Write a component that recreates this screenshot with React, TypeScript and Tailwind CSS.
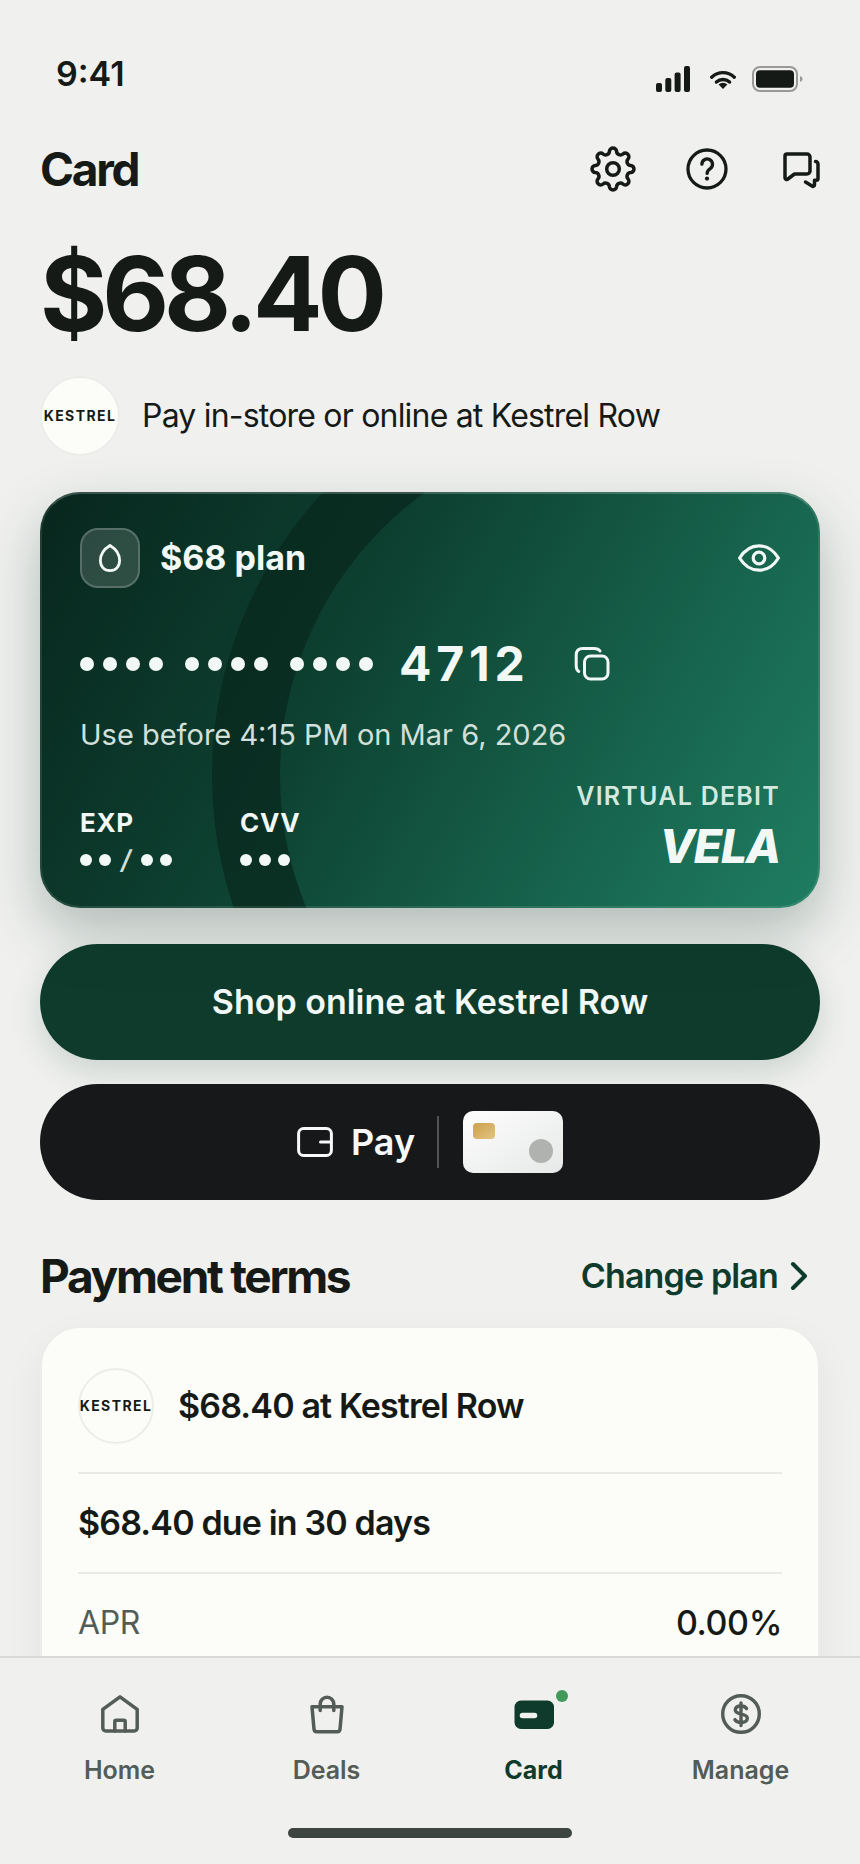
import type { ReactNode } from "react";

const stroke = {
  fill: "none",
  stroke: "currentColor",
  strokeLinecap: "round" as const,
  strokeLinejoin: "round" as const,
};

function gearPath(cx: number, cy: number) {
  const at = (deg: number) => {
    const a = (deg * Math.PI) / 180;
    return `${(cx + 18 * Math.sin(a)).toFixed(2)} ${(cy - 18 * Math.cos(a)).toFixed(2)}`;
  };
  let d = `M${at(-11.5)}`;
  for (let k = 0; k < 8; k++) {
    d += `A3.6 3.6 0 0 1 ${at(k * 45 + 11.5)}A3.8 3.8 0 0 0 ${at(k * 45 + 33.5)}`;
  }
  return d + "Z";
}

function GearIcon() {
  return (
    <svg viewBox="0 0 48 48" className="size-12" strokeWidth="3.5" {...stroke} aria-hidden="true">
      <path d={gearPath(24, 24)} />
      <circle cx="24" cy="24" r="6.3" />
    </svg>
  );
}

function HelpIcon() {
  return (
    <svg viewBox="0 0 48 48" className="size-12" strokeWidth="3.3" {...stroke} aria-hidden="true">
      <circle cx="24" cy="24" r="19" />
      <path d="M18.9 19.2a5.3 5.3 0 1 1 8.6 4.2c-2 1.4-3.4 2.4-3.4 5" />
      <circle cx="24" cy="33.6" r="2.1" fill="currentColor" stroke="none" />
    </svg>
  );
}

function ChatIcon() {
  return (
    <svg viewBox="0 0 48 48" className="size-12" strokeWidth="3.5" {...stroke} aria-hidden="true">
      <path d="M10 9h20a3 3 0 0 1 3 3v14a3 3 0 0 1-3 3H17.5l-6.6 5a1.7 1.7 0 0 1-2.9-1.2V11a2 2 0 0 1 2-2z" />
      <path d="M38.5 16.5a2.5 2.5 0 0 1 2.5 2.5v14.5a1.8 1.8 0 0 1-1.8 1.8h-1.7v4.5a1.5 1.5 0 0 1-2.5 1.2l-6.5-4" />
    </svg>
  );
}

function Signal() {
  return (
    <svg viewBox="0 0 34 26" className="h-[26px] w-[34px]" fill="currentColor" aria-hidden="true">
      <rect x="0" y="17" width="6" height="9" rx="2" />
      <rect x="9.3" y="12" width="6" height="14" rx="2" />
      <rect x="18.6" y="6.5" width="6" height="19.5" rx="2" />
      <rect x="28" y="0" width="6" height="26" rx="2" />
    </svg>
  );
}

function Wifi() {
  return (
    <svg viewBox="0 0 26 26" className="size-[26px]" strokeWidth="3.4" {...stroke} aria-hidden="true">
      <path d="M1.7 11.2c6.6-6.1 16-6.1 22.6 0" />
      <path d="M6.4 16c3.8-3.4 9.4-3.4 13.2 0" />
      <path d="M8.6 18.6a6.3 6.3 0 0 1 8.8 0L13 22.9z" fill="currentColor" stroke="none" />
    </svg>
  );
}

function Battery() {
  return (
    <svg viewBox="0 0 51 26" className="h-[26px] w-[51px]" aria-hidden="true">
      <rect x="1" y="1" width="44" height="24" rx="7" fill="none" stroke="#161a17" strokeOpacity="0.4" strokeWidth="2" />
      <rect x="4" y="4.3" width="38" height="17.4" rx="4" fill="#161a17" />
      <path d="M48 10c2 .8 2.5 1.8 2.5 3s-.5 2.2-2.5 3z" fill="#161a17" fillOpacity="0.4" />
    </svg>
  );
}

function Dots({ count, className }: { count: number; className: string }) {
  return (
    <>
      {Array.from({ length: count }, (_, i) => (
        <span key={i} className={`rounded-full bg-[#f1f8f5] ${className}`} />
      ))}
    </>
  );
}

function Merchant({ className }: { className: string }) {
  return (
    <span
      className={`flex shrink-0 items-center justify-center rounded-full border-2 border-[#ececeb] bg-[#fcfdf9] text-[14px] leading-4 font-bold tracking-widest text-[#161a17] ${className}`}
    >
      KESTREL
    </span>
  );
}

function NavItem({ label, active, children }: { label: string; active?: boolean; children: ReactNode }) {
  return (
    <a
      href="#"
      aria-current={active ? "page" : undefined}
      className={`flex flex-1 flex-col items-center gap-5 text-[25px] leading-8 ${
        active ? "font-bold text-[#0e3b2c]" : "font-semibold text-[#535c56]"
      }`}
    >
      <span className="relative">{children}</span>
      {label}
    </a>
  );
}

export default function App() {
  return (
    <div className="flex h-dvh flex-col overflow-hidden bg-[#f0f1ef] font-['Inter',sans-serif] text-[#161a17]">
      <main className="min-h-0 flex-1 overflow-y-auto [scrollbar-width:none]">
        <div className="flex items-end justify-between pt-14 pr-[57px] pl-14">
          <span className="text-[34px] leading-9 font-semibold">9:41</span>
          <div className="flex items-center">
            <Signal />
            <span className="ml-5">
              <Wifi />
            </span>
            <span className="ml-4">
              <Battery />
            </span>
          </div>
        </div>

        <header className="mt-[52px] flex h-[50px] items-center justify-between pr-[35px] pl-10">
          <h1 className="text-[46px] leading-[52px] font-bold tracking-tighter">Card</h1>
          <div className="flex gap-[46px]">
            <button type="button" aria-label="Settings">
              <GearIcon />
            </button>
            <button type="button" aria-label="Help">
              <HelpIcon />
            </button>
            <button type="button" aria-label="Messages">
              <ChatIcon />
            </button>
          </div>
        </header>

        <div className="px-10">
          <p className="mt-[50px] text-[103px] leading-[100px] font-bold tracking-tighter">$68.40</p>
          <div className="mt-8 flex items-center gap-[22px]">
            <Merchant className="size-20" />
            <p className="text-[32px] leading-[42px] tracking-tight">Pay in-store or online at Kestrel Row</p>
          </div>

          <section className="relative mt-9 flex min-h-[416px] flex-col overflow-hidden rounded-[40px] bg-linear-[120deg,#08261d_0%,#0d4030_38%,#196b53_80%,#1f7d60_100%] px-10 pt-9 pb-8 text-[#f1f8f5] shadow-[0_24px_56px_rgba(14,50,38,0.28)]">
            <div className="absolute top-[-133px] left-[172px] size-[832px] rounded-full border-[68px] border-[#08261d]/70" />
            <div className="absolute inset-0 rounded-[40px] border-2 border-white/10 border-t-white/20" />
            <div className="relative flex items-center gap-5">
              <span className="flex size-[60px] items-center justify-center rounded-[18px] border-2 border-white/20 bg-white/15">
                <svg viewBox="0 0 24 30" className="h-[30px] w-6" strokeWidth="2.8" {...stroke} aria-hidden="true">
                  <path d="M12 2.5C6.500 5.800 2.400 11.500 2.400 17.600c0 6 3.800 10 9.600 10s9.600-4 9.600-10C21.600 11.500 17.500 5.800 12 2.500z" />
                </svg>
              </span>
              <h2 className="flex-1 text-[34px] leading-[42px] font-bold">$68 plan</h2>
              <button type="button" aria-label="Show card details">
                <svg viewBox="0 0 42 28" className="h-7 w-[42px]" strokeWidth="3.2" {...stroke} aria-hidden="true">
                  <path d="M1.600 14C6.500 6 13 1.800 21 1.800S35.500 6 40.400 14C35.500 22 29 26.200 21 26.200S6.500 22 1.600 14z" />
                  <circle cx="21" cy="14" r="5.8" />
                </svg>
              </button>
            </div>

            <div className="relative mt-[52px] flex h-12 items-center">
              <div className="flex gap-[22px]">
                {[0, 1, 2].map((g) => (
                  <span key={g} className="flex gap-[9px]">
                    <Dots count={4} className="size-[14px]" />
                  </span>
                ))}
              </div>
              <span className="ml-[26px] text-[48px] leading-[50px] font-bold tracking-widest">4712</span>
              <button type="button" aria-label="Copy card number" className="ml-11">
                <svg viewBox="0 0 36 36" className="size-9" strokeWidth="3" {...stroke} aria-hidden="true">
                  <rect x="10.5" y="10" width="23.5" height="23" rx="6" />
                  <path d="M4.800 25.500C3 24.300 2.200 22.500 2.200 20V9c0-4.300 2.300-6.600 6.600-6.600H20c3 0 4.800.8 6 2.600" />
                </svg>
              </button>
            </div>

            <p className="relative mt-7 text-[29px] leading-[38px] text-[#d3e0da]">Use before 4:15 PM on Mar 6, 2026</p>

            <div className="relative mt-auto flex items-end">
              <div className="w-40">
                <p className="text-[26px] leading-[34px] font-bold tracking-wide">EXP</p>
                <div className="mt-1 flex h-8 items-center gap-[7px]">
                  <Dots count={2} className="size-3" />
                  <span className="w-4 text-center text-[26px] leading-8 font-semibold text-[#d3e0da] italic">/</span>
                  <Dots count={2} className="size-3" />
                </div>
              </div>
              <div className="flex-1">
                <p className="text-[26px] leading-[34px] font-bold tracking-wide">CVV</p>
                <div className="mt-1 flex h-8 items-center gap-[7px]">
                  <Dots count={3} className="size-3" />
                </div>
              </div>
              <div className="text-right">
                <p className="text-[25px] leading-8 font-semibold tracking-wider text-[#d3e8df]">VIRTUAL DEBIT</p>
                <p className="mt-1 text-[46px] leading-[60px] font-extrabold tracking-tight italic">VELA</p>
              </div>
            </div>
          </section>

          <button
            type="button"
            className="mt-9 flex h-[116px] w-full items-center justify-center rounded-full bg-[#0e3b2c] text-[34px] leading-[42px] font-semibold text-[#f1f8f5] shadow-[0_12px_32px_rgba(14,59,44,0.16)]"
          >
            Shop online at Kestrel Row
          </button>

          <button
            type="button"
            className="mt-6 flex h-[116px] w-full items-center justify-center rounded-full bg-[#17181a] text-[36px] leading-[44px] font-semibold text-[#f7f8fa]"
          >
            <svg viewBox="0 0 36 30" className="mr-[18px] h-[30px] w-9" strokeWidth="3" {...stroke} aria-hidden="true">
              <rect x="1.6" y="1.6" width="32.8" height="26.8" rx="5" />
              <path d="M34 15H23.500" />
            </svg>
            Pay
            <span className="mr-6 ml-[22px] h-[52px] w-0.5 bg-[#515255]" />
            <span className="flex h-[62px] w-[100px] justify-between rounded-[10px] bg-linear-to-br from-[#fdfdfd] to-[#e6e9e7] px-2.5 pt-3 pb-2.5">
              <span className="h-4 w-[22px] rounded-[4px] bg-linear-to-br from-[#c9a04e] to-[#e3c47e]" />
              <span className="size-6 self-end rounded-full bg-[#b0b2b0]" />
            </span>
          </button>

          <div className="mt-[50px] flex items-center justify-between pr-3">
            <h2 className="text-[46px] leading-[52px] font-bold tracking-tighter">Payment terms</h2>
            <a href="#" className="flex items-center gap-3 text-[34px] leading-[42px] font-semibold tracking-tight text-[#0e3b2c]">
              Change plan
              <svg viewBox="0 0 18 30" className="h-[30px] w-[18px]" strokeWidth="4" {...stroke} aria-hidden="true">
                <path d="M3 3l12 12L3 27" />
              </svg>
            </a>
          </div>

          <section className="mt-6 rounded-[40px] border-2 border-[#ececeb] bg-[#fcfdf9] px-9 pt-10 pb-20 shadow-[0_16px_40px_rgba(20,30,25,0.06)]">
            <div className="flex items-center gap-6 border-b-2 border-[#e9eae8] pb-7">
              <Merchant className="size-[76px]" />
              <p className="text-[34px] leading-[42px] font-semibold tracking-tight">$68.40 at Kestrel Row</p>
            </div>
            <p className="flex h-[100px] items-center border-b-2 border-[#e9eae8] text-[34px] leading-[42px] font-semibold tracking-tight">
              $68.40 due in 30 days
            </p>
            <dl className="flex h-[98px] items-center justify-between leading-[42px] tracking-tight">
              <dt className="text-[32px] text-[#535c56]">APR</dt>
              <dd className="text-[34px] font-medium">0.00%</dd>
            </dl>
          </section>
        </div>
      </main>

      <nav className="flex h-[208px] shrink-0 flex-col items-center border-t-2 border-[#d7d9d7] bg-[#f0f1ef] px-4 pt-9">
        <div className="flex w-full">
          <NavItem label="Home">
            <svg viewBox="0 0 40 40" className="size-10" strokeWidth="3.5" {...stroke} aria-hidden="true">
              <path d="M20 2.800l17.200 12.600V34a3 3 0 0 1-3 3H5.800a3 3 0 0 1-3-3V15.400z" />
              <path d="M14.800 37v-9.200a1.500 1.500 0 0 1 1.500-1.500h7.400a1.500 1.500 0 0 1 1.500 1.500V37" />
            </svg>
          </NavItem>
          <NavItem label="Deals">
            <svg viewBox="0 0 40 40" className="size-10" strokeWidth="3.5" {...stroke} aria-hidden="true">
              <path d="M5 12.800h30l-2 22.400a2.800 2.800 0 0 1-2.800 2.600H9.800A2.800 2.800 0 0 1 7 35.200z" />
              <path d="M13.200 16.500V10a6.800 6.800 0 0 1 13.600 0v6.500" />
            </svg>
          </NavItem>
          <NavItem label="Card" active>
            <svg viewBox="0 0 40 40" className="size-10" aria-hidden="true">
              <rect x="0.5" y="6.5" width="39.5" height="28.5" rx="6.5" fill="#0e3b2c" />
              <path d="M8.500 21.500h12" stroke="#f0f1ef" strokeWidth="5.5" strokeLinecap="round" />
            </svg>
            <span className="absolute top-[-4px] right-[-14px] size-3 rounded-full bg-[#419a59]" />
          </NavItem>
          <NavItem label="Manage">
            <svg viewBox="0 0 40 40" className="size-10" strokeWidth="3.4" {...stroke} aria-hidden="true">
              <circle cx="20" cy="20" r="18.3" />
              <path d="M20 9v22.500M25.600 14.600c-1-1.700-3-2.600-5.600-2.600-3.400 0-5.700 1.500-5.700 4 0 5.800 12 2.400 12 8.300 0 2.600-2.500 4.200-6.100 4.200-3 0-5.200-1-6.300-2.900" />
            </svg>
          </NavItem>
        </div>
        <div className="mt-auto mb-[26px] h-2.5 w-[284px] rounded-full bg-[#3e4540]" />
      </nav>
    </div>
  );
}
